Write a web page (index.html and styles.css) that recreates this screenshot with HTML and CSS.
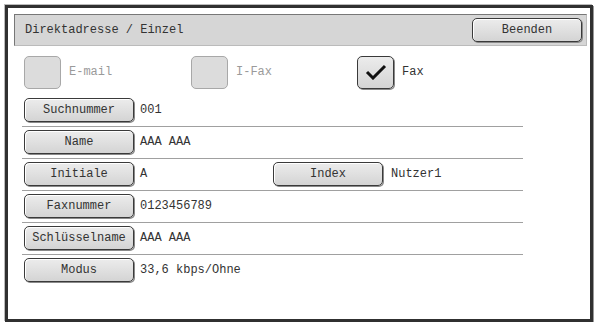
FILE: index.html
```html
<!DOCTYPE html>
<html lang="de">
<head>
    <meta charset="UTF-8">
    <title>Direktadresse / Einzel</title>
    <link rel="stylesheet" href="styles.css">
</head>
<body>
    <div class="frame">
        <!-- Title bar -->
        <div class="title-bar">
            <span class="title">Direktadresse / Einzel</span>
            <button type="button" class="btn">Beenden</button>
        </div>

        <!-- Address type checkboxes -->
        <div class="types">
            <div class="type disabled">
                <span class="box"></span>
                <span class="type-label">E-mail</span>
            </div>
            <div class="type disabled">
                <span class="box"></span>
                <span class="type-label">I-Fax</span>
            </div>
            <div class="type">
                <span class="box checked">
                    <svg width="22" height="16" viewBox="0 0 22 16"><path d="M2 8 L8 14 L20 2" fill="none" stroke="#111" stroke-width="3"/></svg>
                </span>
                <span class="type-label">Fax</span>
            </div>
        </div>

        <!-- Detail rows -->
        <div class="rows">
            <div class="row">
                <button type="button" class="btn">Suchnummer</button>
                <span class="value">001</span>
            </div>
            <div class="row">
                <button type="button" class="btn">Name</button>
                <span class="value">AAA AAA</span>
            </div>
            <div class="row">
                <button type="button" class="btn">Initiale</button>
                <span class="value short">A</span>
                <button type="button" class="btn">Index</button>
                <span class="value">Nutzer1</span>
            </div>
            <div class="row">
                <button type="button" class="btn">Faxnummer</button>
                <span class="value">0123456789</span>
            </div>
            <div class="row">
                <button type="button" class="btn">Schlüsselname</button>
                <span class="value">AAA AAA</span>
            </div>
            <div class="row last">
                <button type="button" class="btn">Modus</button>
                <span class="value">33,6 kbps/Ohne</span>
            </div>
        </div>
    </div>
</body>
</html>
```

FILE: styles.css
```css
body {
    margin: 0;
    background: #ffffff;
    font-family: "Liberation Mono", "Courier New", monospace;
    font-size: 12px;
    color: #333333;
}
.frame {
    box-sizing: border-box;
    margin: 5px 0 0 5px;
    width: 588px;
    height: 317px;
    border: 3px solid #303030;
    box-shadow: 1px 1px 0 #999999, -1px -1px 0 #bbbbbb;
    padding: 6px 0 0 6px;
}
.title-bar {
    box-sizing: border-box;
    width: 573px;
    height: 32px;
    background: #d6d6d6;
    border: 1px solid #777777;
    border-right-color: #bbbbbb;
    border-bottom-color: #bbbbbb;
    display: flex;
    align-items: center;
    justify-content: space-between;
    padding: 0 4px 0 10px;
}
.btn {
    box-sizing: border-box;
    width: 110px;
    height: 24px;
    padding: 0;
    font-family: inherit;
    font-size: 12px;
    color: #333333;
    background: linear-gradient(#ececec, #d4d4d4);
    border: 1px solid #3a3a3a;
    border-radius: 5px;
    box-shadow: 1px 1px 0 #8a8a8a, inset 1px 1px 0 #ffffff;
    cursor: pointer;
}

/* Checkbox row */
.types {
    display: flex;
    padding: 9px 0 0 10px;
    height: 34px;
}
.type {
    display: flex;
    align-items: center;
    gap: 8px;
}
.type:nth-child(1) { width: 167px; }
.type:nth-child(2) { width: 166px; }
.box {
    box-sizing: border-box;
    width: 37px;
    height: 33px;
    border: 1px solid #a8a8a8;
    border-radius: 5px;
    background: #dcdcdc;
    display: flex;
    align-items: center;
    justify-content: center;
}
.box.checked {
    border-color: #3a3a3a;
    background: linear-gradient(#ececec, #d4d4d4);
    box-shadow: 1px 1px 0 #8a8a8a;
}
.disabled .type-label {
    color: #9a9a9a;
}

/* Detail rows */
.rows {
    margin: 6px 0 0 8px;
    width: 501px;
}
.row {
    display: flex;
    align-items: center;
    padding: 3px 0 4px 2px;
    border-bottom: 1px solid #a0a0a0;
}
.row.last {
    border-bottom: none;
}
.value {
    margin-left: 6px;
}
.value.short {
    width: 133px;
}
.value.short + .btn + .value {
    margin-left: 8px;
}
```
